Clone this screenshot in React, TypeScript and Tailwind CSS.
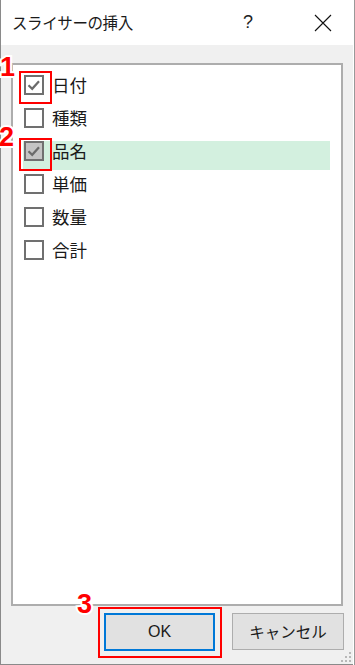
import React from "react";

const items = [
  { name: "日付", checked: true, selected: false },
  { name: "種類", checked: false, selected: false },
  { name: "品名", checked: true, selected: true },
  { name: "単価", checked: false, selected: false },
  { name: "数量", checked: false, selected: false },
  { name: "合計", checked: false, selected: false },
];

const jp = "font-['Noto_Sans_CJK_JP','Noto_Sans',sans-serif]";

const Check: React.FC<{ checked: boolean; grayed: boolean }> = ({ checked, grayed }) => (
  <div
    className={`w-[20px] h-[20px] border-2 border-[#707070] flex items-center justify-center shrink-0 ${
      grayed ? "bg-[#c4c4c4]" : "bg-white"
    }`}
  >
    {checked && (
      <svg width="16" height="16" viewBox="0 0 16 16">
        <path d="M2.5 8.3 L6.2 11.8 L13 4.2" fill="none" stroke="#6b6b6b" strokeWidth="2.2" />
      </svg>
    )}
  </div>
);

const Badge: React.FC<{ n: string; className: string }> = ({ n, className }) => (
  <span
    className={`absolute font-['Liberation_Sans',Arial,sans-serif] font-bold text-[27px] leading-none text-[#ff0000] [paint-order:stroke_fill] [-webkit-text-stroke:4px_white] ${className}`}
  >
    {n}
  </span>
);

const App: React.FC = () => {
  return (
    <div className={`w-[355px] h-[665px] flex bg-white ${jp}`}>
      <div className="relative w-[353px] h-[665px] flex flex-col border-l border-b border-[#8a8a8a] bg-[#f0f0f0]">
        {/* title bar */}
        <div className="h-[45px] bg-white flex items-center shrink-0">
          <span className="ml-[11px] text-[15.5px] text-[#1a1a1a] tracking-[-0.4px]">スライサーの挿入</span>
          <span className="ml-auto mr-[61px] text-[18px] text-[#222] font-['Liberation_Sans',sans-serif]">?</span>
          <svg width="18" height="18" viewBox="0 0 18 18" className="mr-[21px]">
            <path d="M1 1 L17 17 M17 1 L1 17" stroke="#111" strokeWidth="1.1" />
          </svg>
        </div>

        {/* list box */}
        <div className="mt-[18px] ml-[10px] w-[332px] h-[543px] border-2 border-[#adadad] bg-white pt-[10px] pl-[10px]">
          {items.map((it) => (
            <div key={it.name} className="h-[33px]">
              <div
                className={`h-[29px] w-[307px] flex items-start pl-[1px] ${
                  it.selected ? "bg-[#d3f0df]" : ""
                }`}
              >
                <Check checked={it.checked} grayed={it.selected} />
                <span className="ml-[8px] text-[17.5px] leading-[20px] text-[#1a1a1a]">{it.name}</span>
              </div>
            </div>
          ))}
        </div>

        {/* buttons */}
        <div className="mt-[7px] flex ml-[103px] gap-[17px]">
          <button className="w-[111px] h-[38px] bg-[#e1e1e1] border-2 border-[#0078d7] text-[16px] text-[#1a1a1a] font-['Liberation_Sans','Noto_Sans',sans-serif]">
            OK
          </button>
          <button className="w-[112px] h-[37px] bg-[#e1e1e1] border border-[#adadad] text-[15.5px] text-[#1a1a1a]">
            キャンセル
          </button>
        </div>

        {/* size grip */}
        <svg width="11" height="11" viewBox="0 0 11 11" className="absolute right-[1px] bottom-[1px]">
          {[
            [8, 0],
            [4, 4],
            [8, 4],
            [0, 8],
            [4, 8],
            [8, 8],
          ].map(([x, y]) => (
            <rect key={`${x}-${y}`} x={x} y={y} width="2" height="2" fill="#b8b8b8" />
          ))}
        </svg>

        {/* annotations */}
        <div className="absolute left-[18px] top-[71px] w-[33px] h-[33px] border-2 border-[#ff0000]" />
        <div className="absolute left-[18px] top-[138px] w-[33px] h-[33px] border-2 border-[#ff0000]" />
        <div className="absolute left-[97px] top-[607px] w-[124px] h-[51px] border-2 border-[#ff0000]" />
        <Badge n="1" className="left-[-1px] top-[54px]" />
        <Badge n="2" className="left-[-2px] top-[124px]" />
        <Badge n="3" className="left-[76px] top-[591px]" />
      </div>
      <div className="w-[2px] h-full bg-white border-r border-[#999]" />
    </div>
  );
};

export default App;
